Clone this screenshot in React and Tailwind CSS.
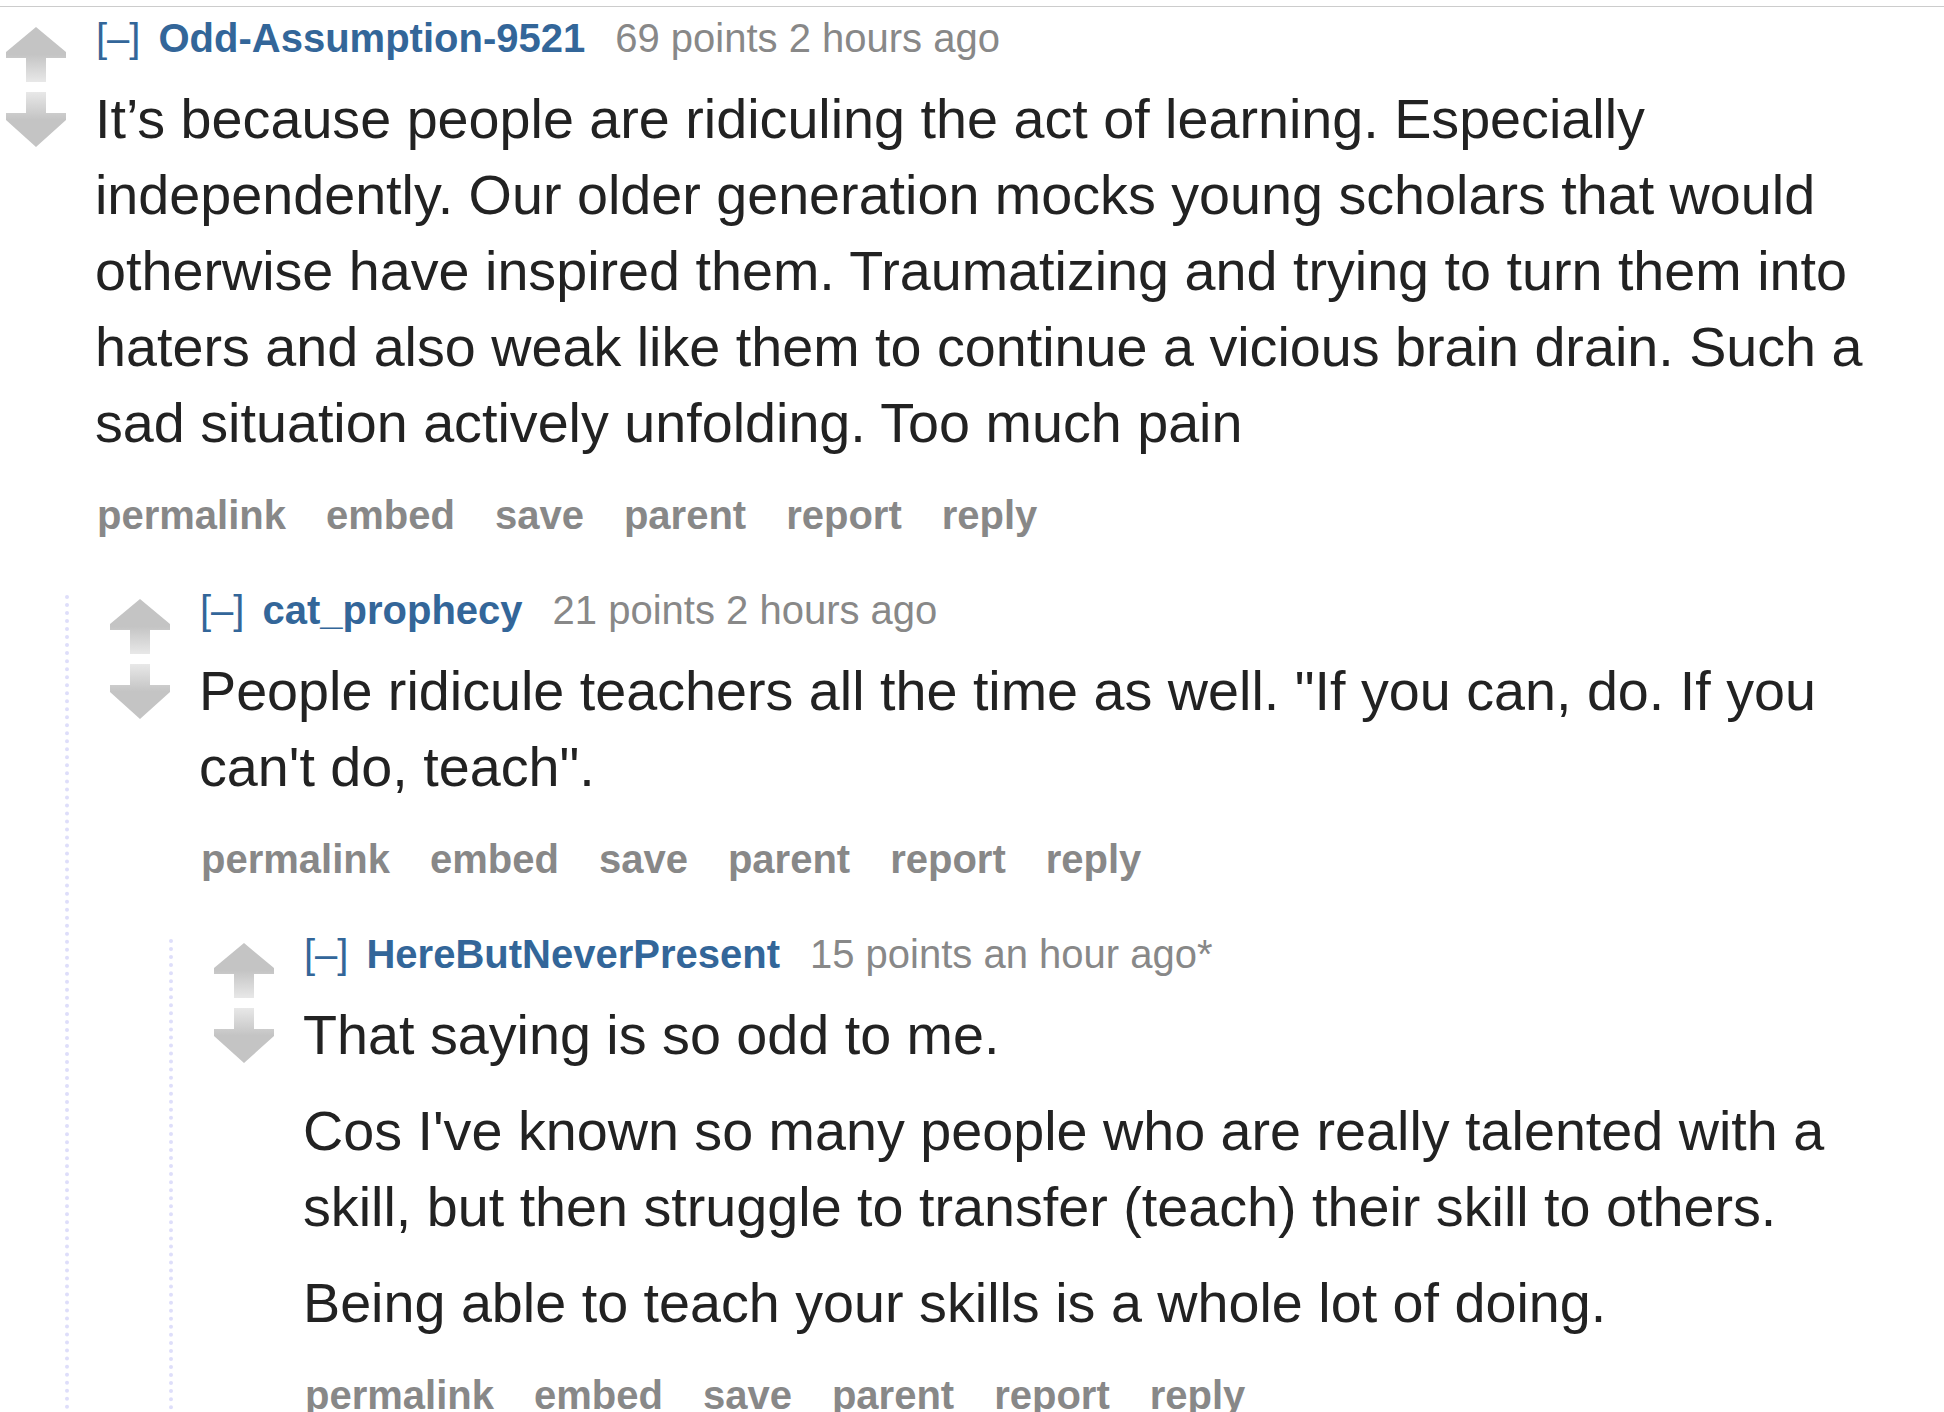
import { useId } from "react";

const comments = {
    author: "Odd-Assumption-9521",
    score: "69 points 2 hours ago",
    body: [
        "It’s because people are ridiculing the act of learning. Especially independently. Our older generation mocks young scholars that would otherwise have inspired them. Traumatizing and trying to turn them into haters and also weak like them to continue a vicious brain drain. Such a sad situation actively unfolding. Too much pain",
    ],
    replies: [
        {
            author: "cat_prophecy",
            score: "21 points 2 hours ago",
            body: ["People ridicule teachers all the time as well. \"If you can, do. If you can't do, teach\"."],
            replies: [
                {
                    author: "HereButNeverPresent",
                    score: "15 points an hour ago*",
                    body: [
                        "That saying is so odd to me.",
                        "Cos I've known so many people who are really talented with a skill, but then struggle to transfer (teach) their skill to others.",
                        "Being able to teach your skills is a whole lot of doing.",
                    ],
                    replies: [],
                },
            ],
        },
    ],
};

const actions = ["permalink", "embed", "save", "parent", "report", "reply"];

function Arrows() {
    const id = useId().replace(/:/g, "");
    return (
        <svg width="60" height="120" viewBox="0 0 60 120" className="blur-[0.6px]">
            <defs>
                <linearGradient id={`up${id}`} x1="0" y1="0" x2="0" y2="55" gradientUnits="userSpaceOnUse">
                    <stop offset="0.5" stopColor="#c4c4c4" />
                    <stop offset="1" stopColor="#e8e8e8" />
                </linearGradient>
                <linearGradient id={`dn${id}`} x1="0" y1="65" x2="0" y2="120" gradientUnits="userSpaceOnUse">
                    <stop offset="0" stopColor="#e8e8e8" />
                    <stop offset="0.5" stopColor="#c4c4c4" />
                </linearGradient>
            </defs>
            <path d="M30 0 L60 25 L60 31 L40 31 L40 55 L20 55 L20 31 L0 31 L0 25 Z" fill={`url(#up${id})`} />
            <path d="M20 65 L40 65 L40 86 L60 86 L60 93 L30 120 L0 93 L0 86 L20 86 Z" fill={`url(#dn${id})`} />
        </svg>
    );
}

function Comment({ data }) {
    return (
        <div>
            <div className="flex flex-row">
                <div className="pl-[6px] pt-[4px] w-[66px] shrink-0">
                    <Arrows />
                </div>
                <div className="ml-[29px] flex-1 pr-[30px]">
                    <div className="ml-[1px] text-[40px] leading-[30px] whitespace-nowrap">
                        <span className="text-[#369] mr-[18px]">[–]</span>
                        <span className="font-bold text-[#369]">{data.author}</span>
                        <span className="ml-[30px] text-[#888]">{data.score}</span>
                    </div>
                    <div className="mt-[28px] flex flex-col gap-[20px] text-[55.7px] leading-[76px] text-[#222]">
                        {data.body.map((p, i) => (
                            <p key={i}>{p}</p>
                        ))}
                    </div>
                    <div className="mt-[39px] ml-[2px] flex flex-row gap-[40px] text-[40px] leading-[30px] font-bold text-[#888]">
                        {actions.map((a) => (
                            <span key={a}>{a}</span>
                        ))}
                    </div>
                </div>
            </div>
            {data.replies.map((r, i) => (
                <div key={i} className="mt-[65px] ml-[65px] pl-[35px] border-l-4 border-dotted border-[#dedefa] pb-[40px]">
                    <Comment data={r} />
                </div>
            ))}
        </div>
    );
}

export default function App() {
    return (
        <div className="h-[1412px] w-full overflow-hidden bg-white font-['Liberation_Sans',Arial,sans-serif]">
            <div className="mt-[6px] h-px bg-[#cccccc]"></div>
            <div className="mt-[16px]">
                <Comment data={comments} />
            </div>
        </div>
    );
}
